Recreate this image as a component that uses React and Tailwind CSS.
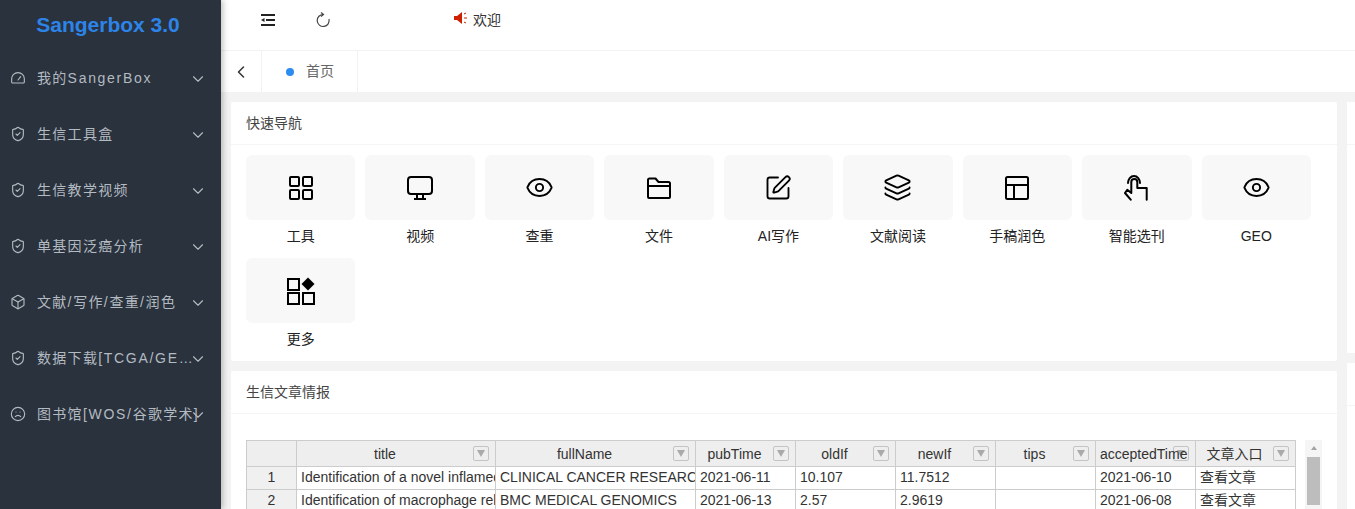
import React from 'react';
import { ChevronDown, ChevronLeft, ShieldCheck, Box, Frown, Eye, SquarePen, Layers } from 'lucide-react';

const FONT = '[font-family:"Liberation_Sans","Noto_Sans_CJK_SC",sans-serif]';

const Gauge = (props) => (
  <svg viewBox="0 0 24 24" fill="none" stroke="currentColor" strokeWidth="1.6" strokeLinecap="round" {...props}>
    <path d="M3.5 19.5a1.5 1.5 0 0 1-1-1.4V13a9.5 9 0 0 1 19 0v5.1a1.5 1.5 0 0 1-1 1.4z" />
    <path d="M12 15l4-5" />
  </svg>
);

const GridIcon = (props) => (
  <svg viewBox="0 0 26 26" fill="none" stroke="currentColor" strokeWidth="2" {...props}>
    <rect x="2" y="2" width="9" height="9" rx="1" />
    <rect x="15" y="2" width="9" height="9" rx="1" />
    <rect x="2" y="15" width="9" height="9" rx="1" />
    <rect x="15" y="15" width="9" height="9" rx="1" />
  </svg>
);

const MonitorIcon = (props) => (
  <svg viewBox="0 0 26 26" fill="none" stroke="currentColor" strokeWidth="2" {...props}>
    <rect x="1" y="2" width="24" height="17" rx="3" />
    <path d="M10 19v4M16 19v4M7 24h12" />
  </svg>
);

const FolderIcon = (props) => (
  <svg viewBox="0 0 26 26" fill="none" stroke="currentColor" strokeWidth="2" strokeLinejoin="round" {...props}>
    <path d="M2 10V5a1.500 1.500 0 0 1 1.500-1.500h6l3 3.500h10A1.500 1.500 0 0 1 24 8.500V22a1 1 0 0 1-1 1H3a1 1 0 0 1-1-1z" />
    <path d="M2 11h22" />
  </svg>
);

const LayoutIcon = (props) => (
  <svg viewBox="0 0 26 26" fill="none" stroke="currentColor" strokeWidth="2" {...props}>
    <rect x="2" y="2" width="22" height="22" rx="1.500" />
    <path d="M2 10h22M10 10v14" />
  </svg>
);

const PointerIcon = (props) => (
  <svg viewBox="0 0 26 26" fill="none" stroke="currentColor" strokeWidth="1.800" strokeLinecap="round" strokeLinejoin="round" {...props}>
    <path d="M4 8a6 7 0 0 1 12 0" />
    <path d="M6.700 24.700L1 18l2.300-3.300 4 3.300V7a3 3 0 0 1 6 0v6h9.400v11.700" />
  </svg>
);

const MoreIcon = (props) => (
  <svg viewBox="0 0 28 28" fill="none" stroke="currentColor" strokeWidth="1.600" {...props}>
    <rect x="1" y="2" width="11" height="11" />
    <rect x="1" y="16" width="11" height="11" />
    <rect x="16" y="16" width="11" height="11" />
    <path d="M21 0.500l6.500 6.500-6.500 6.500L14.500 7z" fill="currentColor" stroke="none" />
  </svg>
);

const Outdent = (props) => (
  <svg viewBox="0 0 16 14" fill="currentColor" {...props}>
    <rect x="1" y="1" width="14" height="2" />
    <rect x="6" y="6" width="9" height="2" />
    <rect x="1" y="11" width="14" height="2" />
    <path d="M1 7L4.500 5v4z" />
  </svg>
);

const Refresh = (props) => (
  <svg viewBox="0 0 16 16" fill="none" stroke="currentColor" strokeWidth="1.200" {...props}>
    <path d="M8.500 2.500A6 6 0 1 0 14 7" />
    <path d="M6 0.500L8.500 2.500 6 4.500" />
  </svg>
);

const Speaker = (props) => (
  <svg viewBox="0 0 14 12" {...props}>
    <path d="M0 4h3l5-4v12L3 8H0z" fill="#cc2200" />
    <path d="M10 2l2-1M10 6h3M10 10l2 1" stroke="#cc2200" strokeWidth="1" fill="none" />
  </svg>
);

const menus = [
  { label: '我的SangerBox', icon: Gauge },
  { label: '生信工具盒', icon: ShieldCheck },
  { label: '生信教学视频', icon: ShieldCheck },
  { label: '单基因泛癌分析', icon: ShieldCheck },
  { label: '文献/写作/查重/润色', icon: Box },
  { label: '数据下载[TCGA/GEO/ICGC]', icon: ShieldCheck },
  { label: '图书馆[WOS/谷歌学术]', icon: Frown },
];

const tiles = [
  { label: '工具', icon: GridIcon, size: 'h-[26px] w-[26px]' },
  { label: '视频', icon: MonitorIcon, size: 'h-[26px] w-[26px]' },
  { label: '查重', icon: Eye, size: 'h-[29px] w-[29px]' },
  { label: '文件', icon: FolderIcon, size: 'h-[26px] w-[26px]' },
  { label: 'AI写作', icon: SquarePen, size: 'h-[28px] w-[28px]' },
  { label: '文献阅读', icon: Layers, size: 'h-[29px] w-[29px]' },
  { label: '手稿润色', icon: LayoutIcon, size: 'h-[26px] w-[26px]' },
  { label: '智能选刊', icon: PointerIcon, size: 'h-[26px] w-[26px]' },
  { label: 'GEO', icon: Eye, size: 'h-[29px] w-[29px]' },
  { label: '更多', icon: MoreIcon, size: 'h-[28px] w-[28px]' },
];

const columns = [
  { name: 'title', width: 'w-[199px]' },
  { name: 'fullName', width: 'w-[200px]' },
  { name: 'pubTime', width: 'w-[100px]' },
  { name: 'oldIf', width: 'w-[100px]' },
  { name: 'newIf', width: 'w-[100px]' },
  { name: 'tips', width: 'w-[100px]' },
  { name: 'acceptedTime', width: 'w-[100px]' },
  { name: '文章入口', width: 'w-[100px]' },
];

const rows = [
  ['Identification of a novel inflamed tumor signature', 'CLINICAL CANCER RESEARCH', '2021-06-11', '10.107', '11.7512', '', '2021-06-10', '查看文章'],
  ['Identification of macrophage related gene signature', 'BMC MEDICAL GENOMICS', '2021-06-13', '2.57', '2.9619', '', '2021-06-08', '查看文章'],
];

const FilterButton = () => (
  <span className="absolute right-[6px] top-[5px] flex h-[15px] w-[16px] items-center justify-center rounded-[2px] border border-[#c4c4c4] bg-[#eeeeee]">
    <span className="h-0 w-0 border-x-[4px] border-t-[7px] border-x-transparent border-t-[#aaaaaa]" />
  </span>
);

// latin runs sit wider than the CJK ones in the menu
const MenuLabel = ({ text }) =>
  text.split(/([\x00-\x7f]+)/).map((part, i) => (
    <span key={i} className={i % 2 ? 'tracking-[1.7px]' : 'tracking-[1.3px]'}>{part}</span>
  ));

const Sidebar = () => (
  <div className="z-10 flex w-[221px] shrink-0 flex-col bg-[#29323d] shadow-[2px_0_6px_rgba(0,0,0,0.25)]">
    <div className="flex h-[50px] items-center justify-center pr-[5px] text-[21px] font-bold text-[#2d84e8]">
      Sangerbox 3.0
    </div>
    {menus.map((m) => (
      <div key={m.label} className="relative flex h-[56px] items-center pl-[10px] text-[14px] text-[#b4bac1]">
        <m.icon className="h-[16px] w-[16px] shrink-0" strokeWidth={1.7} />
        <span className="ml-[11px] w-[164px] truncate">
          <MenuLabel text={m.label} />
        </span>
        <ChevronDown className="absolute left-[189px] top-[20px] h-[18px] w-[18px]" strokeWidth={1.500} />
      </div>
    ))}
  </div>
);

const TopBar = () => (
  <div className="flex h-[51px] shrink-0 items-center border-b border-[#f2f2f2] bg-white pb-[10px] text-[#303133]">
    <Outdent className="ml-[39px] h-[14px] w-[16px] text-[#222222]" />
    <Refresh className="ml-[39px] h-[16px] w-[16px] text-[#444444]" />
    <Speaker className="ml-[123px] mb-[4px] h-[12px] w-[14px]" />
    <span className="ml-[5px] text-[14px] text-[#333333]">欢迎</span>
  </div>
);

const TabBar = () => (
  <div className="flex h-[41px] shrink-0 items-stretch bg-white">
    <div className="flex w-[41px] items-center justify-center border-r border-[#f2f2f2]">
      <ChevronLeft className="h-[20px] w-[20px] text-[#333333]" strokeWidth={1.800} />
    </div>
    <div className="flex w-[96px] items-center border-r border-[#f2f2f2] pl-[24px] text-[14px] text-[#666666]">
      <span className="h-[8px] w-[8px] rounded-full bg-[#2d8cf0]" />
      <span className="ml-[12px]">首页</span>
    </div>
  </div>
);

const NavCard = () => (
  <div className="h-[259px] rounded-[2px] bg-white">
    <div className="flex h-[43px] items-center border-b border-[#f5f5f5] pl-[15px] text-[14px] text-[#444444]">快速导航</div>
    <div className="grid grid-cols-[repeat(9,109.45px)] gap-x-[10px] pl-[15px] pt-[10px]">
      {tiles.map((t) => (
        <div key={t.label} className="h-[103px]">
          <div className="flex h-[65px] items-center justify-center rounded-[6px] bg-[#f8f8f8] text-black">
            <t.icon className={t.size} strokeWidth={t.icon === Eye || t.icon === SquarePen || t.icon === Layers ? 1.600 : 2} />
          </div>
          <div className="flex h-[32px] items-center justify-center text-[14px] text-[#222222]">{t.label}</div>
        </div>
      ))}
    </div>
  </div>
);

const ArticleCard = () => (
  <div className="mt-[10px] h-[200px] rounded-[2px] bg-white">
    <div className="flex h-[43px] items-center border-b border-[#f5f5f5] pl-[15px] text-[14px] text-[#444444]">生信文章情报</div>
    <div className="flex items-start pl-[15px] pt-[26px]">
      <table className="w-[1050px] table-fixed border-collapse text-[14px] leading-[18px] text-[#333333]">
        <thead>
          <tr className="h-[26px]">
            <th className="w-[50px] border border-[#cccccc] bg-[#eeeeee]" />
            {columns.map((c) => (
              <th key={c.name} className={`${c.width} relative whitespace-nowrap border border-[#cccccc] bg-[#eeeeee] pl-[4px] pr-[26px] text-center font-normal`}>
                <FilterButton />
                <span className="relative">{c.name}</span>
              </th>
            ))}
          </tr>
        </thead>
        <tbody>
          {rows.map((r, i) => (
            <tr key={r[0]} className="h-[23px]">
              <td className="border border-[#cccccc] bg-[#f0f0f0] pb-[2px] text-center">{i + 1}</td>
              {r.map((v, j) => (
                <td key={j} className="overflow-hidden whitespace-nowrap border border-[#cccccc] px-[4px] pb-[2px]">{v}</td>
              ))}
            </tr>
          ))}
        </tbody>
      </table>
      <div className="ml-[9px] flex h-[69px] w-[17px] flex-col items-center bg-[#f5f5f5]">
        <span className="mt-[6px] h-0 w-0 border-x-[3px] border-b-[4px] border-x-transparent border-b-[#a3a3a3]" />
        <div className="mt-[7px] h-[48px] w-[13px] bg-[#bdbdbd]" />
      </div>
    </div>
  </div>
);

const SideColumn = () => (
  <div className="ml-[10px] w-[200px] shrink-0">
    <div className="h-[251px] bg-white">
      <div className="h-[43px] border-b border-[#f5f5f5]" />
    </div>
    <div className="mt-[10px] h-[200px] bg-white">
      <div className="h-[43px] border-b border-[#f5f5f5]" />
    </div>
  </div>
);

export default function App() {
  return (
    <div className={`flex h-screen w-full overflow-hidden bg-[#f3f3f3] ${FONT}`}>
      <Sidebar />
      <div className="flex min-w-0 flex-1 flex-col">
        <TopBar />
        <TabBar />
        <div className="flex flex-1 overflow-hidden pl-[10px] pt-[10px]">
          <div className="w-[1106px] shrink-0">
            <NavCard />
            <ArticleCard />
          </div>
          <SideColumn />
        </div>
      </div>
    </div>
  );
}
